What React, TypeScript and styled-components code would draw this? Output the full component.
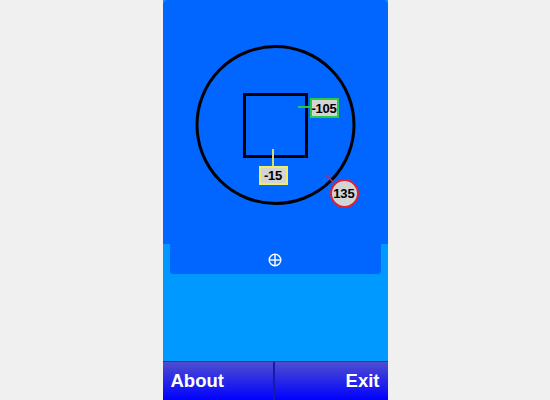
import styled, { createGlobalStyle } from 'styled-components';

const GlobalStyle = createGlobalStyle`
  html, body {
    margin: 0;
    padding: 0;
    background: #f0f0f0;
    font-family: 'Liberation Sans', Arial, sans-serif;
  }
`;

const Phone = styled.div`
  width: 225px;
  height: 400px;
  margin: 0 auto;
  background: #0099ff;
  display: flex;
  flex-direction: column;
`;

const Screen = styled.div`
  position: relative;
  height: 244px;
  background: #0066ff;
  border-radius: 5px 5px 0 0;
`;

const Drawing = styled.svg`
  display: block;
`;

const Tray = styled.div`
  height: 30px;
  margin: 0 7px;
  background: #0066ff;
  border-radius: 0 0 3px 3px;
  display: flex;
  align-items: center;
  justify-content: center;
  padding-top: 2px;
  box-sizing: border-box;
`;

const Spacer = styled.div`
  flex: 1;
`;

const Tag = styled.div<{ edge: string; left: number; top: number; h: number }>`
  position: absolute;
  left: ${({ left }) => left}px;
  top: ${({ top }) => top}px;
  width: 29px;
  height: ${({ h }) => h}px;
  box-sizing: border-box;
  border: 2px solid ${({ edge }) => edge};
  background: #d4d4d4;
  color: #000;
  font-size: 13px;
  font-weight: bold;
  letter-spacing: -0.3px;
  display: flex;
  align-items: center;
  justify-content: center;
`;

const Dial = styled.div`
  position: absolute;
  left: 167px;
  top: 179px;
  width: 29px;
  height: 29px;
  box-sizing: border-box;
  border: 2px solid #dd2233;
  border-radius: 50%;
  background: #d4d4d4;
  color: #000;
  font-size: 13px;
  font-weight: bold;
  display: flex;
  align-items: center;
  justify-content: center;
`;

const BottomBar = styled.div`
  height: 38px;
  display: grid;
  grid-template-columns: 1fr 1fr;
  border-top: 1px solid #2a2ab8;
  background: linear-gradient(#4e4ed0, #0000ff);
`;

const BarButton = styled.div<{ align: 'left' | 'right' }>`
  display: flex;
  align-items: center;
  justify-content: ${({ align }) => (align === 'left' ? 'flex-start' : 'flex-end')};
  padding: 0 8px;
  color: #fff;
  font-size: 18.5px;
  font-weight: bold;
  border-right: ${({ align }) => (align === 'left' ? '2px solid #1a1aa8' : 'none')};
`;

const Crosshair = () => (
  <svg width="14" height="14" viewBox="0 0 14 14">
    <circle cx="7" cy="7" r="5.8" fill="none" stroke="#fff" strokeWidth="1.4" />
    <line x1="7" y1="1" x2="7" y2="13" stroke="#fff" strokeWidth="1.4" />
    <line x1="1" y1="7" x2="13" y2="7" stroke="#fff" strokeWidth="1.4" />
  </svg>
);

export default function App() {
  return (
    <>
      <GlobalStyle />
      <Phone>
        <Screen>
          <Drawing width="225" height="244">
            <circle cx="112.5" cy="125" r="78.5" fill="none" stroke="#000" strokeWidth="3" />
            <rect x="81.5" y="94.5" width="62" height="62" fill="none" stroke="#000" strokeWidth="3" />
            <line x1="135" y1="107" x2="148" y2="107" stroke="#22cc44" strokeWidth="2" />
            <line x1="110" y1="149" x2="110" y2="167" stroke="#d8d870" strokeWidth="2" />
            <line x1="163" y1="175" x2="171" y2="183" stroke="#dd2233" strokeWidth="1.5" />
          </Drawing>
          <Tag edge="#22cc44" left={147} top={98} h={20}>-105</Tag>
          <Tag edge="#eeee66" left={96} top={166} h={19}>-15</Tag>
          <Dial>135</Dial>
        </Screen>
        <Tray>
          <Crosshair />
        </Tray>
        <Spacer />
        <BottomBar>
          <BarButton align="left">About</BarButton>
          <BarButton align="right">Exit</BarButton>
        </BottomBar>
      </Phone>
    </>
  );
}
